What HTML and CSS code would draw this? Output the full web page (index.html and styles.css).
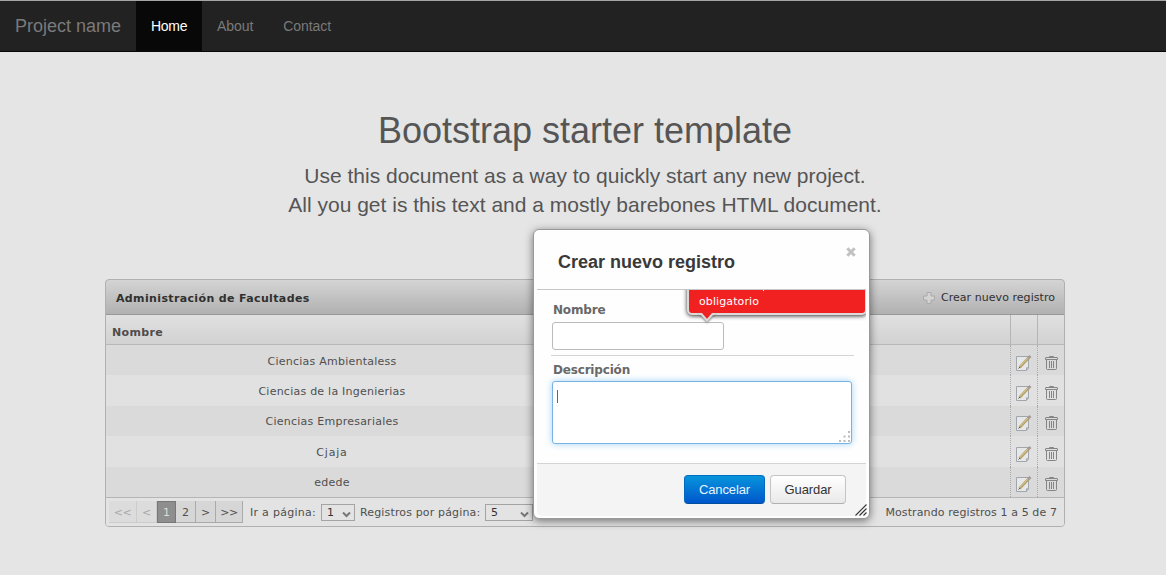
FILE: index.html
```html
<!DOCTYPE html>
<html lang="es">
<head>
<meta charset="utf-8">
<title>Bootstrap starter template</title>
<link rel="stylesheet" href="styles.css">
</head>
<body>
<svg class="defs" width="0" height="0" aria-hidden="true">
  <symbol id="edit" viewBox="0 0 17 18">
    <path d="M1.5 2.5h12v11.500l-2 2.500h-10z" fill="#e6e7e8" stroke="#a1a5ac"/>
    <path d="M11.500 16v-2.200h2.300" fill="none" stroke="#a1a5ac"/>
    <path d="M4.500 13.500L13.500 4" stroke="#b3a06b" stroke-width="2.600"/>
    <path d="M4.800 12.600L13 4" stroke="#e0cf98" stroke-width=".9"/>
    <path d="M13 4.500L15.500 2" stroke="#a59a94" stroke-width="2.600"/>
    <path d="M3.500 14.500l1.500-1.500" stroke="#555"/>
  </symbol>
  <symbol id="trash" viewBox="0 0 13 16">
    <g fill="none" stroke="#858585">
      <path d="M4.500 2.500v-1h4v1M.5 4.500V3q0-.5.500-.5h11q.5 0 .5.500v1.500zM1.500 5v8.500q0 1 1 1h8q1 0 1-1V5"/>
      <path d="M4.500 6v7M6.500 6v7M8.500 6v7"/>
    </g>
  </symbol>
</svg>
<nav class="navbar">
  <a class="brand">Project name</a>
  <a class="nav-item active">Home</a>
  <a class="nav-item">About</a>
  <a class="nav-item">Contact</a>
</nav>
<main class="container">
  <header class="starter">
    <h1>Bootstrap starter template</h1>
    <p>Use this document as a way to quickly start any new project.<br>All you get is this text and a mostly barebones HTML document.</p>
  </header>
  <section class="grid">
    <div class="grid-title">
      <span class="grid-name">Administración de Facultades</span>
      <span class="add"><svg width="14" height="14" viewBox="0 0 14 14"><path d="M5 1.500h4V5h3.500v4H9v3.500H5V9H1.500V5H5z" fill="#d3d3d3" stroke="#aaa"/></svg><span class="add-text">Crear nuevo registro</span></span>
    </div>
    <div class="row head"><div class="first">Nombre</div><div></div><div class="tool"></div><div class="tool"></div></div>
    <div class="row odd"><div class="name">Ciencias Ambientaless</div><div></div><div class="tool"><svg width="17" height="18"><use href="#edit"/></svg></div><div class="tool"><svg width="13" height="16"><use href="#trash"/></svg></div></div>
    <div class="row"><div class="name">Ciencias de la Ingenierias</div><div></div><div class="tool"><svg width="17" height="18"><use href="#edit"/></svg></div><div class="tool"><svg width="13" height="16"><use href="#trash"/></svg></div></div>
    <div class="row odd"><div class="name">Ciencias Empresariales</div><div></div><div class="tool"><svg width="17" height="18"><use href="#edit"/></svg></div><div class="tool"><svg width="13" height="16"><use href="#trash"/></svg></div></div>
    <div class="row"><div class="name short">Cjaja</div><div></div><div class="tool"><svg width="17" height="18"><use href="#edit"/></svg></div><div class="tool"><svg width="13" height="16"><use href="#trash"/></svg></div></div>
    <div class="row odd"><div class="name">edede</div><div></div><div class="tool"><svg width="17" height="18"><use href="#edit"/></svg></div><div class="tool"><svg width="13" height="16"><use href="#trash"/></svg></div></div>
    <footer class="grid-foot">
      <div class="pages">
        <span class="page w27 off">&lt;&lt;</span><span class="page w20 off">&lt;</span><span class="page current">1</span><span class="page w20">2</span><span class="page w20">&gt;</span><span class="page w28">&gt;&gt;</span>
      </div>
      <span class="goto">Ir a página:</span>
      <span class="select small">1<svg width="9" height="7" viewBox="0 0 9 7"><path d="M1 1.500l3.500 3.500L8 1.500" fill="none" stroke="#777" stroke-width="2"/></svg></span>
      <span class="size">Registros por página:</span>
      <span class="select">5<svg width="9" height="7" viewBox="0 0 9 7"><path d="M1 1.500l3.500 3.500L8 1.500" fill="none" stroke="#777" stroke-width="2"/></svg></span>
      <span class="info">Mostrando registros 1 a 5 de 7</span>
    </footer>
  </section>
</main>
<div class="dialog">
  <div class="dialog-head"><h2>Crear nuevo registro</h2>
    <svg class="close" width="10" height="10" viewBox="0 0 10 10"><path d="M1.300 1.300l7.400 7.400M8.700 1.300l-7.400 7.400" stroke="#c2c2c2" stroke-width="3"/></svg>
  </div>
  <div class="dialog-body">
    <div class="field"><label>Nombre</label><div class="input"></div></div>
    <div class="field last"><label>Descripción</label><div class="textarea"><i class="caret"></i>
      <svg class="grip" width="13" height="13" viewBox="0 0 13 13" fill="#bbb"><path d="M10 1h2v2h-2zM5.500 5.500h2v2h-2zM10 5.500h2v2h-2zM1 10h2v2H1zM5.500 10h2v2h-2zM10 10h2v2h-2z"/></svg></div></div>
    <div class="error"><span>obligatorio</span><i class="dot"></i>
      <svg class="arrow" width="16" height="11" viewBox="0 0 16 11"><path d="M1 0H15L13 1L8 7L3 1z" fill="#f22121"/><path d="M0 1h2.500L8 7.500L13.500 1H16" fill="none" stroke="#dedada" stroke-width="2"/></svg></div>
  </div>
  <div class="dialog-foot"><button class="btn primary">Cancelar</button><button class="btn">Guardar</button></div>
  <svg class="resize" width="12" height="12" viewBox="0 0 12 12"><path d="M.5 11.500l11-11M4.500 11.500l7-7M8.500 11.500l3-3" stroke="#333" stroke-width="1.100"/></svg>
</div>
</body>
</html>
```
FILE: styles.css
```css
* { box-sizing: border-box; }
body { margin: 0; height: 575px; overflow: hidden; position: relative; background: #e5e5e5; color: #555; font-family: "Liberation Sans", Arial, sans-serif; }
svg { display: block; flex: none; }
.defs { position: absolute; }
h1, h2, p { margin: 0; font-weight: normal; }
.navbar { display: flex; height: 52px; background: #222; border-top: 1px solid #a3a6a5; border-bottom: 1px solid #080808; }
.brand { width: 136px; padding-left: 15px; font-size: 18px; line-height: 51px; color: #7a7a7a; white-space: nowrap; }
.nav-item { padding: 0 15px; font-size: 14px; line-height: 50px; color: #7a7a7a; letter-spacing: -.07px; }
.nav-item.active { width: 66px; background: #080808; color: #fff; letter-spacing: -.3px; }
.container { width: 960px; margin-left: 105px; padding-top: 59px; }
.starter { height: 168px; text-align: center; white-space: nowrap; }
h1 { font-size: 36px; line-height: 40px; margin-bottom: 10px; }
.starter p { font-size: 21px; line-height: 29px; }

.grid { width: 960px; height: 248px; border: 1px solid #b0b0b0; border-radius: 4px; font: 11px "DejaVu Sans", Verdana, sans-serif; color: #4f4f4f; overflow: hidden; white-space: nowrap; }
.grid-title { display: flex; justify-content: space-between; align-items: center; height: 36px; margin: -1px -1px 0; padding: 1px 9px 0 10px; border: 1px solid #999; border-radius: 4px 4px 0 0; background: linear-gradient(#d4d4d4, #b1b1b1); color: #303030; }
.grid-name { font-weight: bold; letter-spacing: .36px; padding-top: 1px; }
.add { display: flex; align-items: center; gap: 5px; }
.add-text { letter-spacing: .05px; }
.row { display: grid; grid-template-columns: 452px 452px 27px 27px; height: 30.4px; align-items: center; background: #e1e1e1; }
.row.odd { background: #dadada; }
.row.head { height: 30px; border-bottom: 1px solid #b8b8b8; background: linear-gradient(#e0e0e0, #d2d2d2); font-weight: bold; color: #504c4c; }
.first { padding: 5px 0 0 6px; letter-spacing: .35px; }
.name { text-align: center; padding-top: 2px; letter-spacing: .24px; }
.name.short { letter-spacing: .8px; }
.tool { display: flex; height: 100%; align-items: center; justify-content: center; border-left: 1px dotted #aaa; padding: 5px 1px 0 0; }
.tool + .tool { padding-right: 0; }
.head .tool { border-left: 1px solid #b5b5b5; }
.grid-foot { display: flex; align-items: center; height: 30px; border-top: 1px solid #b5b5b5; padding-left: 3px; padding-right: 7px; background: #e3e3e3; }
.pages { display: flex; height: 22px; width: 134px; margin-right: 7px; }
.page { width: 19px; height: 22px; line-height: 23px; text-align: center; background: #d6d6d6; border: solid #aaa; border-width: 0 1px 1px 0; }
.w20 { width: 20px; } .w27 { width: 28px; letter-spacing: -.5px; } .w28 { width: 27px; letter-spacing: -.5px; }
.page.off { color: #a8a8a8; background: #dcdcdc; border-color: #ccc; }
.page.current { background: #8e8e8e; color: #ddd; border: 1px solid #777; line-height: 21px; }
.select { display: flex; align-items: center; justify-content: space-between; width: 48px; height: 17px; border: 1px solid #a4a4a4; padding: 0 3px 0 5px; color: #333; }
.select svg { margin-top: 5px; }
.select.small { width: 34px; }
.goto { width: 71px; letter-spacing: .28px; }
.size { width: 125px; margin-left: 5px; letter-spacing: .15px; }
.info { margin-left: auto; letter-spacing: .1px; }

.dialog { position: absolute; left: 533px; top: 229px; width: 337px; height: 290px; padding: 0 3px 3px; border: 1px solid #999; border-radius: 6px; background: #fefefe; box-shadow: 0 2px 9px rgba(0,0,0,.5); }
.dialog-head { display: flex; justify-content: space-between; height: 60px; padding: 17px 10px 0 21px; border-bottom: 1px solid #c6c6c6; color: #393939; }
h2 { font-size: 18px; font-weight: bold; line-height: 31px; white-space: nowrap; }
.dialog-body { position: relative; height: 173px; overflow: hidden; padding: 13px 12px 0 14px; font-family: "DejaVu Sans", Verdana, sans-serif; }
.field { height: 53px; border-bottom: 1px solid #d4d4d4; }
.field.last { border: 0; padding-top: 7px; }
.field label { display: block; height: 16px; margin: 0 0 3px 2px; line-height: 14px; font-size: 12px; font-weight: bold; color: #686868; letter-spacing: -.18px; }
.input { width: 172px; height: 28px; margin-left: 1px; border: 1px solid #bbb; border-radius: 3px; background: #fff; }
.textarea { position: relative; width: 300px; height: 63px; margin: -1px 0 0 1px; border: 1px solid #74b4e7; border-radius: 3px; background: #fff; box-shadow: 0 0 7px #a5d2f6; }
.caret { position: absolute; left: 4px; top: 8px; width: 1px; height: 13px; background: #666; }
.grip { position: absolute; right: 0; bottom: 0; }
.error { position: absolute; left: 150px; top: -10px; width: 180px; height: 35px; padding: 13px 0 0 10px; border: 2px solid #dedada; border-radius: 5px; background: #f22121; color: #fff; font-size: 11px; line-height: 13px; letter-spacing: .1px; box-shadow: 0 1px 4px #333; }
.arrow { position: absolute; left: 10px; top: 31px; filter: drop-shadow(0 1px 1px #777); }
.dot { position: absolute; left: 74px; top: 8px; width: 1px; height: 1px; background: #fff; }
.dialog-foot { display: flex; gap: 5px; align-items: flex-start; justify-content: flex-end; height: 53px; padding: 11px 20px 0 0; border-top: 1px solid #d4d4d4; border-radius: 0 0 5px 5px; background: #f4f4f4; }
.btn { width: 76px; height: 29px; padding: 0; border: 1px solid #c4c4c4; border-bottom-color: #b0b0b0; border-radius: 4px; background: linear-gradient(#fff, #e9e9e9); color: #333; font: 13px "Liberation Sans", Arial, sans-serif; letter-spacing: -.1px; }
.btn.primary { width: 81px; border-color: #0070c4 #0068bd #0050a0; background: linear-gradient(#0794db, #0057cc); color: #e8f4ff; }
.close { margin: 0; }
.resize { position: absolute; right: 2px; bottom: 2px; }
```
